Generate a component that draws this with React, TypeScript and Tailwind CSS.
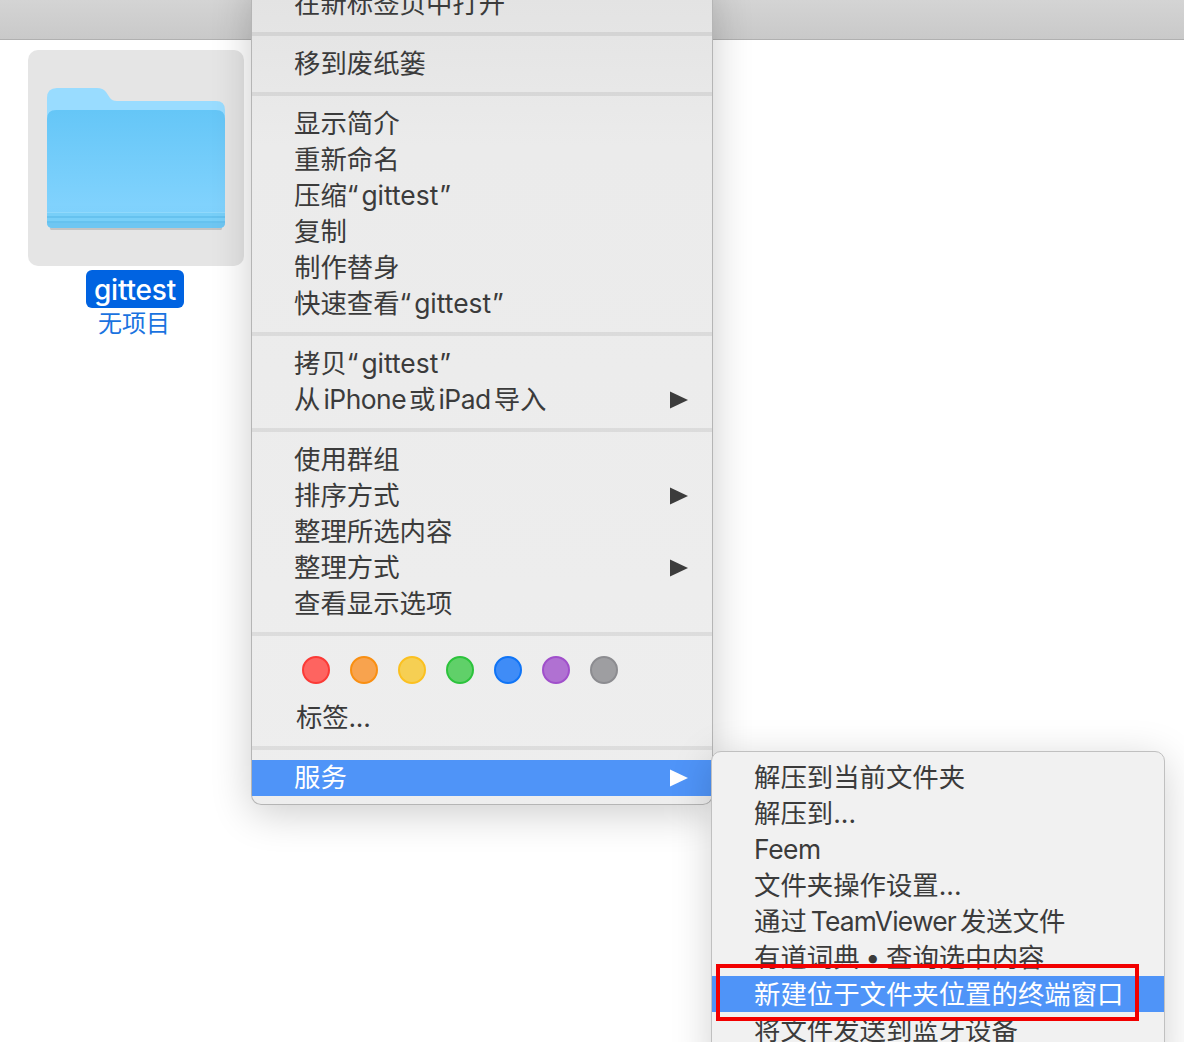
import type { ReactNode } from "react";

const sans = "font-['Inter','Noto_Sans_CJK_SC',sans-serif]";

function Arrow({ white }: { white?: boolean }) {
  return (
    <svg width="18" height="18" viewBox="0 0 18 18" className={`absolute left-[418px] ${white ? "top-[9px]" : "top-[10px]"}`}>
      <path d="M0 0.5 L18 9 L0 17.5 Z" fill={white ? "#ffffff" : "#3c3c3c"} />
    </svg>
  );
}

function Row({ label, arrow }: { label: ReactNode; arrow?: boolean }) {
  return (
    <div className="relative h-9 pl-[42px] text-[26.4px] leading-9 whitespace-nowrap text-[#3b3b3b]">
      {label}
      {arrow && <Arrow />}
    </div>
  );
}

function Sep({ last }: { last?: boolean }) {
  return <div className={`mt-[11px] ${last ? "mb-[10px]" : "mb-[9px]"} h-1 bg-black/[0.07]`} />;
}

function Quoted() {
  return (
    <>
      <span className="mr-[3px]">“</span>gittest<span className="ml-[1px]">”</span>
    </>
  );
}

function FolderIcon() {
  return (
    <svg width="180" height="144" viewBox="0 0 180 144" className="block">
      <defs>
        <linearGradient id="front" x1="0" y1="0" x2="0" y2="1">
          <stop offset="0" stopColor="#65c6f7" />
          <stop offset="0.8" stopColor="#80d2fd" />
          <stop offset="1" stopColor="#7dd0fb" />
        </linearGradient>
      </defs>
      <path
        d="M1 12 Q1 2 11 2 L51 2 Q57 2 60 6 L64 12 Q66 15 71 15 L170 15 Q179 15 179 24 L179 60 L1 60 Z"
        fill="#99dcff"
      />
      <rect x="4" y="141" width="172" height="3" rx="1.5" fill="#000000" fillOpacity="0.14" />
      <path
        d="M1 33 Q1 24 10 24 L170 24 Q179 24 179 33 L179 136 Q179 142 173 142 L7 142 Q1 142 1 136 Z"
        fill="url(#front)"
      />
      <rect x="1" y="126" width="178" height="1" fill="#90d9fc" />
      <rect x="1" y="127" width="178" height="3" fill="#78cff8" />
      <rect x="1" y="130" width="178" height="2" fill="#66c2ef" />
      <rect x="1" y="132" width="178" height="3" fill="#78cff8" />
      <rect x="1" y="135" width="178" height="2" fill="#66c2ef" />
      <path d="M1 137 L179 137 Q179 142 173 142 L7 142 Q1 142 1 137 Z" fill="#6ec6f2" />
    </svg>
  );
}

const tagColors = [
  "bg-[#fe6460] border-[#fb3a36]",
  "bg-[#f8a34e] border-[#f98f12]",
  "bg-[#f6cf53] border-[#fbc020]",
  "bg-[#60d069] border-[#2cc33c]",
  "bg-[#3f8cf7] border-[#0f74f6]",
  "bg-[#b071d2] border-[#a04fcb]",
  "bg-[#9e9ea1] border-[#8c8c90]",
];

export default function App() {
  return (
    <div className={`relative h-[1042px] w-[1184px] overflow-hidden bg-white ${sans}`}>
      {/* toolbar */}
      <div className="h-10 border-b border-[#b0b0b0] bg-gradient-to-b from-[#d4d4d4] to-[#c9c9c9]" />

      {/* selected folder */}
      <div className="ml-7 mt-2.5 flex w-[216px] flex-col items-center">
        <div className="flex h-[216px] w-[216px] items-center justify-center rounded-[10px] bg-[#e5e5e5]">
          <FolderIcon />
        </div>
        <div className="mt-1 -ml-[2px] h-[38px] rounded-[6px] bg-[#0063e1] px-2 text-[28px] leading-[40px] font-medium tracking-[-0.2px] text-white">
          gittest
        </div>
        <div className="-ml-[4px] text-[24px] leading-[32px] text-[#1a73e0]">无项目</div>
      </div>

      {/* context menu */}
      <div className="absolute left-[251px] top-[-20px] h-[825px] w-[462px] rounded-b-[10px] border border-[#b5b5b5] border-t-0 bg-gradient-to-b from-[#e2e2e2] via-[#ebebeb] via-20% to-[#eeeeee] shadow-[0_8px_40px_rgba(0,0,0,0.2)]">
        <div className="pt-[5px]">
          <Row label="在新标签页中打开" />
          <Sep />
          <Row label="移到废纸篓" />
          <Sep />
          <Row label="显示简介" />
          <Row label="重新命名" />
          <Row label={<>压缩<Quoted /></>} />
          <Row label="复制" />
          <Row label="制作替身" />
          <Row label={<>快速查看<Quoted /></>} />
          <Sep />
          <Row label={<>拷贝<Quoted /></>} />
          <Row
            label={
              <>
                从<span className="mx-[3px] tracking-[-0.5px]">iPhone</span>或
                <span className="mx-[3px] tracking-[-0.5px]">iPad</span>导入
              </>
            }
            arrow
          />
          <Sep />
          <Row label="使用群组" />
          <Row label="排序方式" arrow />
          <Row label="整理所选内容" />
          <Row label="整理方式" arrow />
          <Row label="查看显示选项" />
          <Sep />
          <div className="flex gap-5 pl-[50px] pt-[11px]">
            {tagColors.map((c) => (
              <div key={c} className={`h-7 w-7 rounded-full border-2 ${c}`} />
            ))}
          </div>
          <div className="mt-[15px] h-9 pl-[44px] text-[26.4px] leading-9 tracking-[-0.2px] text-[#3b3b3b]">标签...</div>
          <Sep last />
          <div className="relative h-9 bg-[#4f94f8] pl-[42px] text-[26.4px] leading-[34px] text-white">
            服务
            <Arrow white />
          </div>
        </div>
      </div>

      {/* services submenu */}
      <div className="absolute left-[711px] top-[751px] h-[320px] w-[454px] rounded-t-[10px] border border-[#c0c0c0] bg-[#f1f1f1] pt-[7px] shadow-[0_8px_40px_rgba(0,0,0,0.18)]">
        <Row label="解压到当前文件夹" />
        <Row label="解压到..." />
        <Row label={<span className="tracking-[-0.4px]">Feem</span>} />
        <Row label="文件夹操作设置..." />
        <Row
          label={
            <>
              通过<span className="mx-[4px] tracking-[-0.8px]">TeamViewer</span>发送文件
            </>
          }
        />
        <Row
          label={
            <>
              有道词典<span className="mx-[7px] font-bold">•</span>查询选中内容
            </>
          }
        />
        <div className="mt-[1px] h-9 bg-[#4f94f8] pl-[42px] text-[26.4px] leading-9 whitespace-nowrap text-white">
          新建位于文件夹位置的终端窗口
        </div>
        <Row label="将文件发送到蓝牙设备" />
      </div>

      {/* red annotation box */}
      <div className="absolute left-[716px] top-[964px] h-[57px] w-[423px] border-4 border-[#f20000]" />
    </div>
  );
}
